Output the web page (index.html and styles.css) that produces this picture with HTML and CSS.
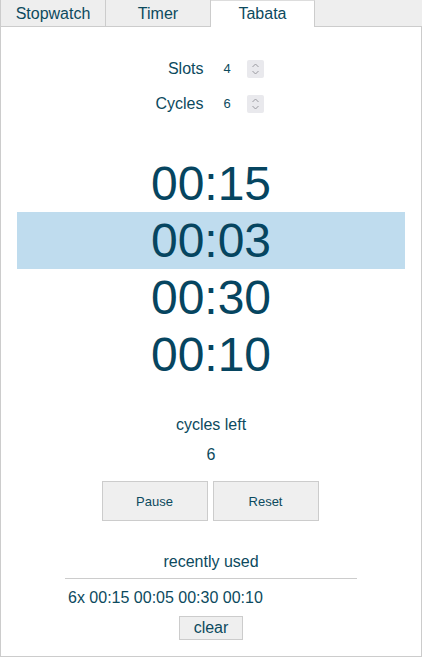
FILE: index.html
```html
<!DOCTYPE html>
<html>
<head>
<meta charset="utf-8">
<link rel="stylesheet" href="styles.css">
</head>
<body>
<div class="app">
  <div class="tabs">
    <div class="tab">Stopwatch</div>
    <div class="tab">Timer</div>
    <div class="tab active">Tabata</div>
    <div class="tab-rest"></div>
  </div>
  <div class="panel">
    <div class="settings">
      <div class="label">Slots</div>
      <div class="field"><span class="value">4</span><span class="spin"><svg width="17" height="18" viewBox="0 0 17 18"><path d="M5.5 7 L8.5 4 L11.5 7 M5.5 11 L8.5 14 L11.5 11" fill="none" stroke="#9a9aa0" stroke-width="1"/></svg></span></div>
      <div class="label">Cycles</div>
      <div class="field"><span class="value">6</span><span class="spin"><svg width="17" height="18" viewBox="0 0 17 18"><path d="M5.5 7 L8.5 4 L11.5 7 M5.5 11 L8.5 14 L11.5 11" fill="none" stroke="#9a9aa0" stroke-width="1"/></svg></span></div>
    </div>
    <div class="times">
      <div class="time">00:15</div>
      <div class="time current">00:03</div>
      <div class="time">00:30</div>
      <div class="time">00:10</div>
    </div>
    <div class="caption">cycles left</div>
    <div class="count">6</div>
    <div class="buttons">
      <button class="btn">Pause</button>
      <button class="btn">Reset</button>
    </div>
    <div class="recent-title">recently used</div>
    <div class="recent">
      <div class="recent-item">6x 00:15 00:05 00:30 00:10</div>
      <div class="clear-row"><button class="clear">clear</button></div>
    </div>
  </div>
</div>
</body>
</html>
```

FILE: styles.css
```css
html, body {
  margin: 0;
  padding: 0;
  background: #fff;
}
body {
  font-family: "Liberation Sans", Arial, sans-serif;
  color: #0c4a5e;
}
.app {
  width: 422px;
  height: 657px;
  display: flex;
  flex-direction: column;
}
.tabs {
  display: flex;
  height: 26px;
  background: #eeeeee;
  border-left: 1px solid #ccc;
  border-bottom: 1px solid #ccc;
  flex: none;
}
.tab {
  width: 104px;
  border-right: 1px solid #ccc;
  font-size: 16px;
  line-height: 27px;
  text-align: center;
  color: #0c4a5e;
}
.tab.active {
  background: #fff;
  height: 27px;
  margin-bottom: -1px;
  border-top: 1px solid #ddd;
  box-sizing: border-box;
  line-height: 26px;
}
.tab-rest {
  flex: 1;
}
.panel {
  flex: 1;
  border-left: 1px solid #ccc;
  border-right: 1px solid #ccc;
  border-bottom: 1px solid #ccc;
  display: flex;
  flex-direction: column;
  align-items: center;
  padding-top: 24px;
}
.settings {
  display: grid;
  grid-template-columns: auto auto;
  grid-auto-rows: 35px;
  column-gap: 20px;
  align-items: center;
  margin-left: -3px;
}
.label {
  font-size: 16px;
  text-align: right;
}
.field {
  display: flex;
  align-items: center;
}
.value {
  font-size: 13px;
  width: 23px;
}
.spin {
  display: block;
  width: 17px;
  height: 18px;
  background: #e9e9ed;
  border-radius: 2px;
}
.spin svg {
  display: block;
}
.times {
  align-self: stretch;
  margin: 34px 16px 0;
}
.time {
  height: 57px;
  line-height: 57px;
  font-size: 48px;
  text-align: center;
  color: #064560;
}
.time.current {
  background: #bfdcee;
}
.caption {
  margin-top: 32px;
  font-size: 16px;
  line-height: 20px;
}
.count {
  margin-top: 10px;
  font-size: 16px;
  line-height: 20px;
}
.buttons {
  display: flex;
  gap: 5px;
  margin-top: 16px;
  margin-right: 2px;
}
.btn {
  width: 106px;
  height: 40px;
  background: #efefef;
  border: 1px solid #ccc;
  font-family: "Liberation Sans", Arial, sans-serif;
  font-size: 13px;
  color: #0c4a5e;
  padding: 0;
}
.recent-title {
  margin-top: 31px;
  font-size: 16px;
  line-height: 20px;
}
.recent {
  width: 292px;
  margin-top: 6px;
  border-top: 1px solid #ccc;
}
.recent-item {
  margin-top: 9px;
  padding-left: 3px;
  font-size: 16px;
  line-height: 20px;
}
.clear-row {
  display: flex;
  justify-content: center;
  margin-top: 8px;
}
.clear {
  width: 64px;
  height: 24px;
  background: #efefef;
  border: 1px solid #ccc;
  font-family: "Liberation Sans", Arial, sans-serif;
  font-size: 16px;
  color: #0c4a5e;
  padding: 0;
}
```
